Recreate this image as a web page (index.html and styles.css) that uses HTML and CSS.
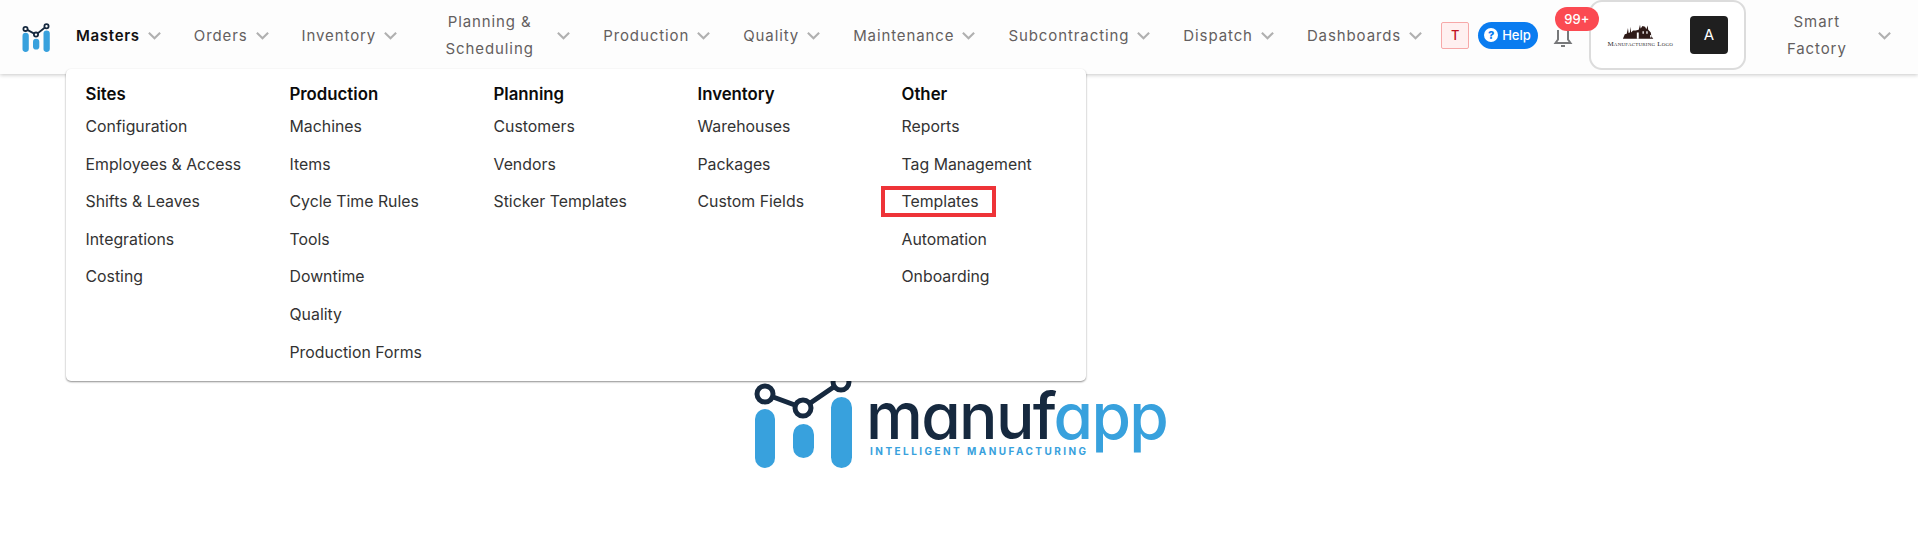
FILE: index.html
```html
<!DOCTYPE html>
<html lang="en">
<head>
<meta charset="utf-8">
<title>Manufapp</title>
<link rel="stylesheet" href="styles.css">
</head>
<body>
<header class="topbar">
  <svg class="brand-mark" viewBox="0 0 100 100" aria-label="Manufapp">
    <rect class="pill" x="5" y="36" width="21" height="64" rx="10.5"/>
    <rect class="pill" x="40" y="56" width="21" height="36" rx="10.5"/>
    <rect class="pill" x="75" y="28" width="21" height="72" rx="10.5"/>
    <path class="link" d="M15 23 50 42 85 14"/>
    <circle class="node" cx="15" cy="23" r="7"/>
    <circle class="node" cx="50" cy="42" r="7"/>
    <circle class="node" cx="85" cy="14" r="7"/>
  </svg>
  <nav class="nav">
    <a class="nav-item active">Masters<svg class="chev" viewBox="0 0 16 16"><path d="M2 5l6 6 6-6"/></svg></a>
    <a class="nav-item">Orders<svg class="chev" viewBox="0 0 16 16"><path d="M2 5l6 6 6-6"/></svg></a>
    <a class="nav-item">Inventory<svg class="chev" viewBox="0 0 16 16"><path d="M2 5l6 6 6-6"/></svg></a>
    <a class="nav-item nav-wrap"><span class="wrap-label">Planning &amp; Scheduling</span><svg class="chev" viewBox="0 0 16 16"><path d="M2 5l6 6 6-6"/></svg></a>
    <a class="nav-item">Production<svg class="chev" viewBox="0 0 16 16"><path d="M2 5l6 6 6-6"/></svg></a>
    <a class="nav-item">Quality<svg class="chev" viewBox="0 0 16 16"><path d="M2 5l6 6 6-6"/></svg></a>
    <a class="nav-item">Maintenance<svg class="chev" viewBox="0 0 16 16"><path d="M2 5l6 6 6-6"/></svg></a>
    <a class="nav-item">Subcontracting<svg class="chev" viewBox="0 0 16 16"><path d="M2 5l6 6 6-6"/></svg></a>
    <a class="nav-item">Dispatch<svg class="chev" viewBox="0 0 16 16"><path d="M2 5l6 6 6-6"/></svg></a>
    <a class="nav-item nav-last">Dashboards<svg class="chev" viewBox="0 0 16 16"><path d="M2 5l6 6 6-6"/></svg></a>
  </nav>
  <div class="tools">
    <span class="tenant">T</span>
    <a class="help"><span class="help-icon">?</span>Help</a>
    <span class="bell">
      <svg viewBox="0 0 20 20"><path d="M5 2v9.5L2.500 15h15L15 11.500V2"/><path class="clapper" d="M8 18h4"/></svg>
      <span class="badge">99+</span>
    </span>
    <div class="account">
      <div class="company-logo">
        <svg class="factory" viewBox="0 0 60 26">
          <path d="M3 26 6 19l3-1 2-9 1 8 2-1 1-9 1 9 3-3 4 0 5-1 2-8 1 6 3-4 4 1 2 4 2-6 1 7 4 4 1 6 3 4z"/>
          <path class="window" d="M25 16h3v10h-3zM34 14h2v4h-2zM40 14h2v4h-2zM46 20h2v4h-2z"/>
        </svg>
        <span class="company-name">Manufacturing Logo</span>
      </div>
      <span class="avatar">A</span>
    </div>
    <a class="nav-item nav-plant"><span class="wrap-label">Smart Factory</span><svg class="chev" viewBox="0 0 16 16"><path d="M2 5l6 6 6-6"/></svg></a>
  </div>
</header>

<section class="mega">
  <div class="mega-col">
    <h3>Sites</h3>
    <a>Configuration</a><a>Employees &amp; Access</a><a>Shifts &amp; Leaves</a><a>Integrations</a><a>Costing</a>
  </div>
  <div class="mega-col">
    <h3>Production</h3>
    <a>Machines</a><a>Items</a><a>Cycle Time Rules</a><a>Tools</a><a>Downtime</a><a>Quality</a><a>Production Forms</a>
  </div>
  <div class="mega-col">
    <h3>Planning</h3>
    <a>Customers</a><a>Vendors</a><a>Sticker Templates</a>
  </div>
  <div class="mega-col">
    <h3>Inventory</h3>
    <a>Warehouses</a><a>Packages</a><a>Custom Fields</a>
  </div>
  <div class="mega-col">
    <h3>Other</h3>
    <a>Reports</a><a>Tag Management</a><a class="marked">Templates</a><a>Automation</a><a>Onboarding</a>
  </div>
</section>

<main class="splash">
  <div class="splash-logo">
    <svg class="splash-mark" viewBox="0 0 98 96" aria-label="Manufapp mark">
      <rect class="pill" x="1" y="34" width="20" height="59" rx="10"/>
      <rect class="pill" x="39" y="49" width="21" height="34" rx="10.500"/>
      <rect class="pill" x="77" y="22" width="21" height="71" rx="10.500"/>
      <path class="link big" d="M11 19 49 33 87 7"/>
      <circle class="node big" cx="11" cy="19" r="8"/>
      <circle class="node big" cx="49" cy="33" r="8"/>
      <circle class="node big" cx="87" cy="7" r="8"/>
    </svg>
    <div class="wordmark">
      <div class="word"><span class="word-dark">manuf</span><span class="word-blue">app</span></div>
      <div class="tagline">INTELLIGENT MANUFACTURING</div>
    </div>
  </div>
</main>
</body>
</html>
```

FILE: styles.css
```css
* { box-sizing: border-box; }
html, body { margin: 0; height: 100%; }
body {
  background: #fff;
  font-family: Inter, "Noto Sans", sans-serif;
  overflow: hidden;
}
a { text-decoration: none; color: inherit; }

.topbar {
  display: flex;
  align-items: center;
  height: 74px;
  padding-left: 21px;
  padding-bottom: 4px;
  background: #fdfdfd;
  box-shadow: 0 1px 4px rgba(0, 0, 0, .22);
  position: relative;
  z-index: 2;
}
.brand-mark { width: 30px; height: 30px; margin-right: 25px; margin-top: 4px; flex: none; }
.pill { fill: #38a1dd; }
.link { fill: none; stroke: #16293f; stroke-width: 6; }
.node { fill: #fff; stroke: #16293f; stroke-width: 6; }
.link.big, .node.big { stroke-width: 5; }

.nav { display: flex; align-items: center; }
.nav-item {
  display: flex;
  align-items: center;
  gap: 7px;
  margin-right: 32px;
  font-size: 15px;
  letter-spacing: .9px;
  line-height: 27px;
  color: #645f5f;
  font-weight: 400;
  white-space: nowrap;
}
.nav-item.nav-last { margin-right: 18px; }
.nav-item.active { color: #111; font-weight: 600; letter-spacing: .7px; }
.wrap-label {
  width: 119px;
  white-space: normal;
  text-align: center;
}
.chev { width: 15px; height: 15px; flex: none; }
.chev path { fill: none; stroke: #b0b0b0; stroke-width: 2.200; }

.tools { display: flex; align-items: center; height: 74px; margin-bottom: -4px; }
.tenant {
  width: 28px;
  height: 27px;
  margin-bottom: 4px;
  display: flex;
  align-items: center;
  justify-content: center;
  background: #fff0f0;
  border: 1px solid #f7a8a8;
  border-radius: 2px;
  color: #c1121f;
  font-size: 13px;
  font-weight: 500;
}
.help {
  display: flex;
  align-items: center;
  gap: 4px;
  height: 27px;
  margin: 0 0 4px 9px;
  padding: 0 7px 0 6px;
  border-radius: 14px;
  background: #0a7cf0;
  color: #fff;
  font-size: 13px;
  font-weight: 500;
}
.help-icon {
  width: 14px;
  height: 14px;
  border-radius: 50%;
  background: #fff;
  color: #0a7cf0;
  font-size: 11px;
  font-weight: 800;
  line-height: 14px;
  text-align: center;
}
.bell { position: relative; width: 20px; height: 20px; margin-left: 15px; margin-top: 2px; }
.bell svg { width: 20px; height: 20px; display: block; }
.bell path { fill: none; stroke: #77787a; stroke-width: 2; }
.badge {
  position: absolute;
  left: 2px;
  top: -21px;
  width: 44px;
  height: 24px;
  border-radius: 12px;
  background: #fb4a52;
  color: #fff;
  font-size: 13px;
  font-weight: 500;
  line-height: 24px;
  text-align: center;
}
.account {
  display: flex;
  align-items: center;
  gap: 14px;
  width: 157px;
  height: 70px;
  margin: 0 0 0 16px;
  padding: 0 16px 0 14px;
  border: 2px solid #dcdcdc;
  border-radius: 13px;
  background: #fff;
  align-self: flex-start;
}
.company-logo { width: 71px; display: flex; flex-direction: column; align-items: center; flex: none; }
.factory { width: 38px; height: 17px; }
.factory path { fill: #2e1a17; }
.factory .window { fill: #fff; }
.company-name {
  font-family: "Liberation Serif", serif;
  font-size: 7px;
  font-variant: small-caps;
  letter-spacing: .2px;
  color: #2a2a2a;
  white-space: nowrap;
  line-height: 10px;
}
.avatar {
  width: 38px;
  height: 38px;
  flex: none;
  border-radius: 4px;
  background: #1f1f1f;
  color: #fff;
  font-size: 15px;
  line-height: 38px;
  text-align: center;
}
.nav-plant { margin: 0 0 4px 21px; gap: 10px; }
.nav-plant .wrap-label { width: 100px; }

.mega {
  position: absolute;
  left: 66px;
  top: 69px;
  z-index: 3;
  width: 1020px;
  height: 312px;
  display: grid;
  grid-template-columns: repeat(5, 204px);
  padding: 14px 0 0 19.500px;
  background: #fff;
  border-radius: 5px;
  box-shadow: 0 1px 2px rgba(0, 0, 0, .45);
}
.mega-col { display: flex; flex-direction: column; align-items: flex-start; }
.mega-col h3 {
  margin: 0 0 3px;
  font-size: 16.800px;
  line-height: 22px;
  font-weight: 600;
  color: #0b0b0b;
}
.mega-col a {
  position: relative;
  height: 37.600px;
  line-height: 37.600px;
  font-size: 15.850px;
  color: #333;
  white-space: nowrap;
}
.marked::after {
  content: "";
  position: absolute;
  left: -21px;
  right: -17px;
  top: 3px;
  bottom: 4px;
  border: 4px solid #ee3338;
}

.splash { display: flex; justify-content: center; padding-top: 301px; }
.splash-logo { display: flex; align-items: flex-start; margin-left: -1.800px; }
.splash-mark { width: 98px; height: 96px; flex: none; margin-right: 14px; }
.wordmark { position: relative; width: 296px; height: 96px; }
.word {
  font-size: 64px;
  line-height: 64px;
  margin-top: 9px;
  letter-spacing: -1.700px;
  font-weight: 500;
  font-feature-settings: "cv11";
  white-space: nowrap;
}
.word-dark { color: #16293f; }
.word-blue { color: #38a1dd; }
.tagline {
  margin-top: -2px;
  margin-left: 4px;
  font-size: 10px;
  line-height: 10px;
  font-weight: 700;
  letter-spacing: 2.450px;
  color: #38a1dd;
  white-space: nowrap;
}
```
